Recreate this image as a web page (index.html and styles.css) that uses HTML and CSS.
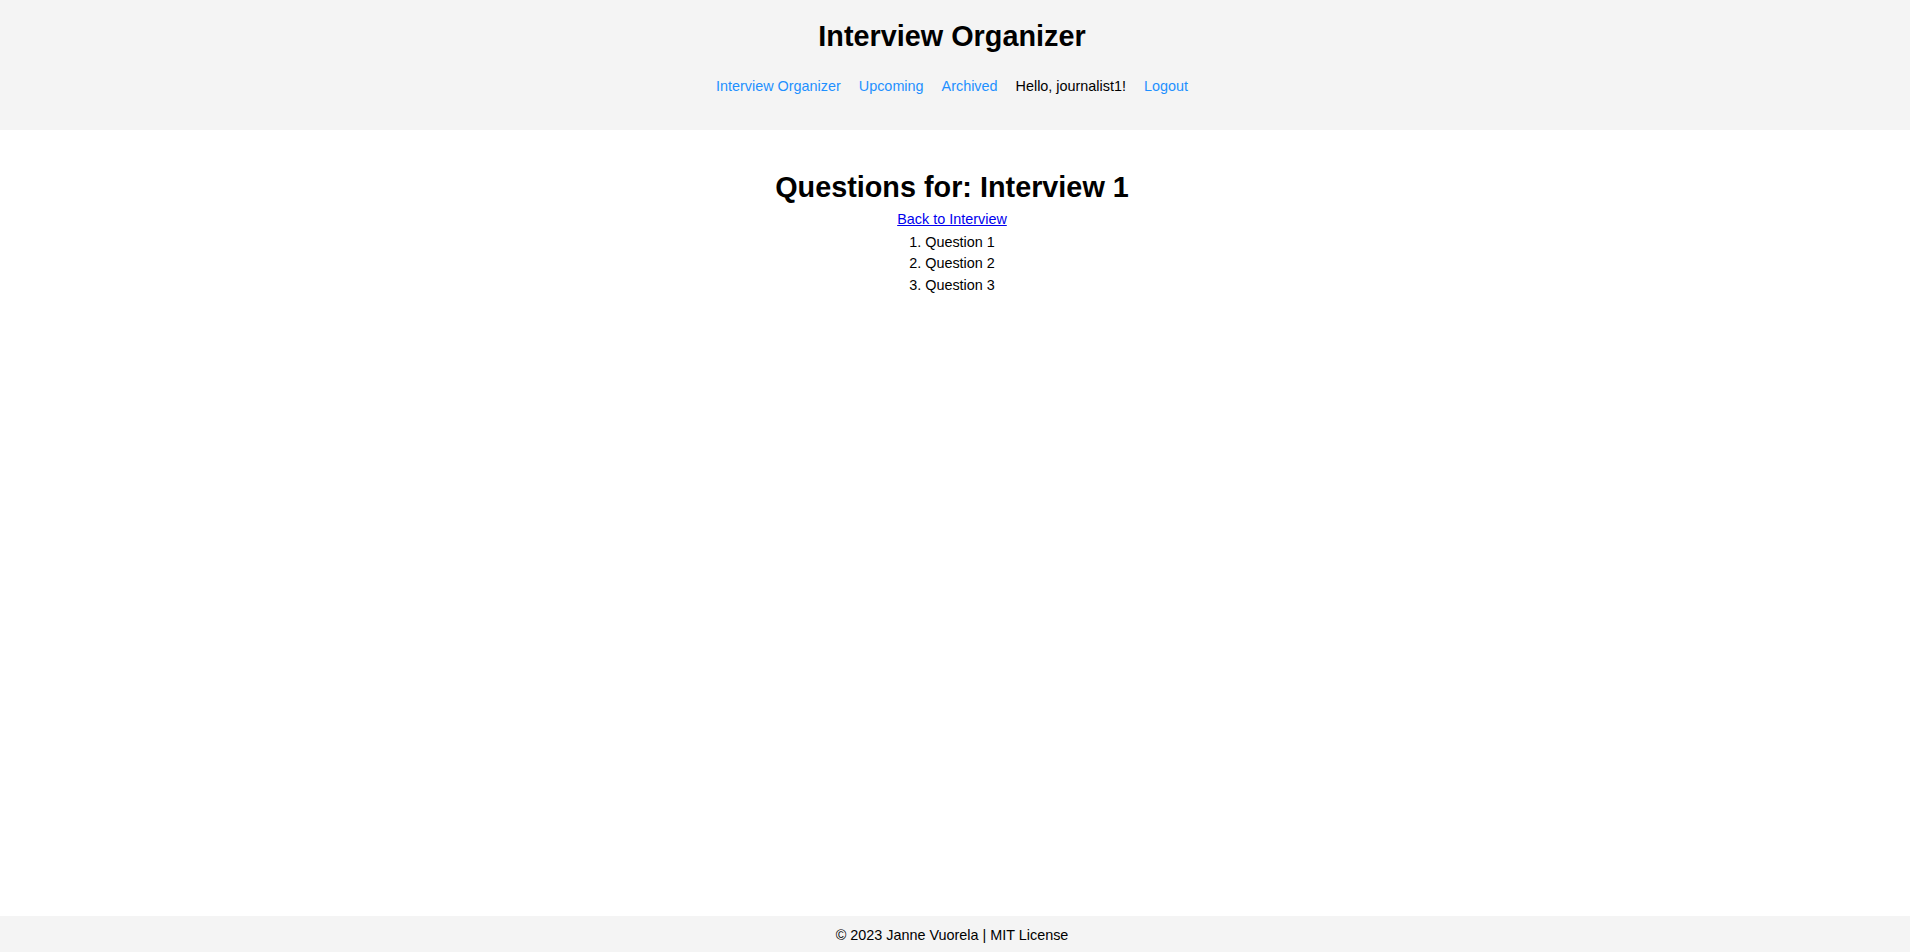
FILE: index.html
```html
<!DOCTYPE html>
<html lang="en">
<head>
<meta charset="utf-8">
<title>Interview Organizer</title>
<link rel="stylesheet" href="styles.css">
</head>
<body>
<div class="page">
  <header class="site-header">
    <h1 class="site-title">Interview Organizer</h1>
    <nav class="site-nav">
      <a href="#">Interview Organizer</a>
      <a href="#">Upcoming</a>
      <a href="#">Archived</a>
      <span class="greeting">Hello, journalist1!</span>
      <a href="#">Logout</a>
    </nav>
  </header>
  <main class="content">
    <h1 class="page-title">Questions for: Interview 1</h1>
    <a class="back-link" href="#">Back to Interview</a>
    <ol class="questions">
      <li>Question 1</li>
      <li>Question 2</li>
      <li>Question 3</li>
    </ol>
  </main>
  <footer class="site-footer">© 2023 Janne Vuorela | MIT License</footer>
</div>
</body>
</html>
```
FILE: styles.css
```css
html, body {
  margin: 0;
  padding: 0;
}
body {
  font-family: "Liberation Sans", Arial, sans-serif;
  font-size: 14.4px;
  color: #000;
  background: #fff;
}
.page {
  min-height: 100vh;
  display: flex;
  flex-direction: column;
}
.site-header {
  background: #f4f4f4;
  text-align: center;
  padding: 20px 6px 36px 0;
}
.site-title {
  margin: 0;
  font-size: 28.8px;
  font-weight: bold;
  line-height: normal;
}
.site-nav {
  margin-top: 24.5px;
  display: flex;
  justify-content: center;
  gap: 18px;
  line-height: normal;
}
.site-nav a {
  color: #1e90ff;
  text-decoration: none;
}
.greeting {
  color: #000;
}
.content {
  flex: 1;
  text-align: center;
  padding: 41px 6px 0 0;
}
.page-title {
  margin: 0;
  font-size: 28.8px;
  font-weight: bold;
  line-height: normal;
}
.back-link {
  display: inline-block;
  margin-top: 7.5px;
  color: #0000ee;
  text-decoration: underline;
}
.questions {
  margin: 4.5px 0 0;
  padding: 0;
  list-style-position: inside;
  line-height: 21.6px;
}
.site-footer {
  background: #f4f4f4;
  text-align: center;
  height: 36px;
  box-sizing: border-box;
  padding: 10px 6px 0 0;
  line-height: 18px;
}
```
